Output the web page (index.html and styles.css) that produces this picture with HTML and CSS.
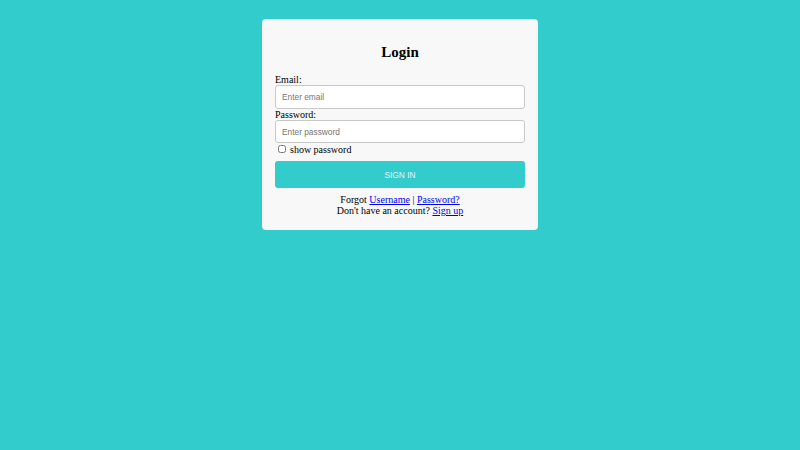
FILE: index.html
```html
<!DOCTYPE html>
<html lang="en">
<head>
<meta charset="utf-8">
<title>Login</title>
<link rel="stylesheet" href="styles.css">
</head>
<body>
<div class="card">
  <h2 class="title">Login</h2>
  <form class="form">
    <label class="label" for="email">Email:</label>
    <input class="field" id="email" type="email" placeholder="Enter email">
    <label class="label" for="password">Password:</label>
    <input class="field" id="password" type="password" placeholder="Enter password">
    <div class="show-row">
      <input class="check" id="show" type="checkbox">
      <label class="show-label" for="show">show password</label>
    </div>
    <button class="btn" type="button">SIGN IN</button>
  </form>
  <div class="footer">
    <div>Forgot <a href="#">Username</a> | <a href="#">Password?</a></div>
    <div>Don't have an account? <a href="#">Sign up</a></div>
  </div>
</div>
</body>
</html>
```

FILE: styles.css
```css
html, body {
  margin: 0;
  padding: 0;
}
body {
  background: #33cccc;
  font-family: "Liberation Serif", "Times New Roman", serif;
  font-size: 10px;
  line-height: 11.5px;
  color: #000;
}
.card {
  box-sizing: border-box;
  width: 276px;
  margin: 19px auto 0;
  padding: 12.5px 13px 13.5px;
  background: #f8f8f8;
  border-radius: 4px;
}
.title {
  margin: 12.5px 0 13px;
  font-size: 15px;
  line-height: 17.25px;
  font-weight: bold;
  text-align: center;
}
.form {
  display: flex;
  flex-direction: column;
}
.label {
  display: block;
  line-height: 11px;
}
.field {
  box-sizing: border-box;
  width: 250px;
  height: 23.5px;
  margin: 0;
  padding: 0 6px;
  border: 1px solid #c8c8c8;
  border-radius: 3px;
  background: #fff;
  font-family: "Liberation Sans", Arial, sans-serif;
  font-size: 8.33px;
  color: #333;
}
.field::placeholder {
  color: #757575;
}
.show-row {
  display: flex;
  align-items: center;
  height: 12px;
  margin-top: 0;
}
.check {
  width: 8px;
  height: 8px;
  margin: 0 4px 0 3px;
}
.show-label {
  line-height: 11.5px;
}
.btn {
  box-sizing: border-box;
  width: 250px;
  height: 27px;
  margin: 6px 0 0;
  padding: 0;
  border: none;
  border-radius: 3px;
  background: #33cccc;
  color: #f0f0f0;
  font-family: "Liberation Sans", Arial, sans-serif;
  font-size: 8.33px;
}
.footer {
  margin-top: 5.5px;
  text-align: center;
}
.footer a {
  color: #0000ee;
}
```
